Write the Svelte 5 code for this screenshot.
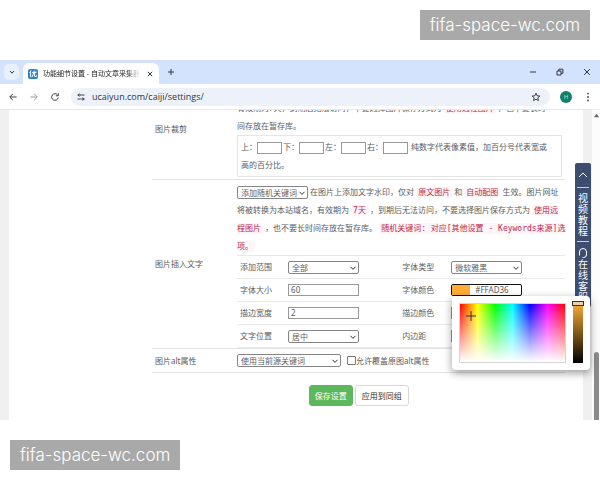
<script lang="ts">
    let ranges = ["全部", "首图", "尾图"];
    let fonts = ["微软雅黑", "宋体", "黑体"];
    let positions = ["居中", "左上", "右下"];
    let sources = ["使用当前源关键词", "使用标题"];
    let modes = ["添加随机关键词", "添加标题"];

    let color = $state("#FFAD36");
    let fontSize = $state("60");
    let strokeWidth = $state("2");
    let overwrite = $state(false);

    const sides = ["上", "下", "左", "右"];
</script>

{#snippet dropdown(id, options, label)}
    <span class="dropdown {id}">
        <select {id} aria-label={label}>
            {#each options as option}
                <option>{option}</option>
            {/each}
        </select>
        <svg viewBox="0 0 8 8"><path d="M1.5 2.8 4 5.4 6.5 2.8" /></svg>
    </span>
{/snippet}

<div class="screen">
    <div class="mark mark-top">fifa-space-wc.com</div>

    <div class="browser">
        <header class="tabs">
            <button class="tab-search" aria-label="搜索标签页">
                <svg viewBox="0 0 10 10"><path d="M3 4 5 6.2 7 4" /></svg>
            </button>
            <div class="tab">
                <svg class="favicon" viewBox="0 0 10 10">
                    <rect width="10" height="10" rx="2" />
                    <path d="M3 1.5 1.8 4M2.6 3.5V8M4.2 3.5H8.4M6 1.8 5.4 5 3.9 8M6.6 4V7.4H8.5V6.3M7 1.6 8 2.6" />
                </svg>
                <span class="title">功能细节设置 - 自动文章采集器</span>
                <button class="close" aria-label="关闭">
                    <svg viewBox="0 0 10 10"><path d="M2.8 2.8 7.2 7.2M7.2 2.8 2.8 7.2" /></svg>
                </button>
            </div>
            <button class="new-tab" aria-label="新标签页">
                <svg viewBox="0 0 10 10"><path d="M5 2V8M2 5H8" /></svg>
            </button>
            <div class="window-buttons">
                <button aria-label="最小化">
                    <svg viewBox="0 0 10 10"><path d="M2 5H8" /></svg>
                </button>
                <button aria-label="还原">
                    <svg viewBox="0 0 10 10"><path d="M2 4H6V8H2ZM3.8 4V2.2H7.9V6.3H6" /></svg>
                </button>
                <button aria-label="关闭窗口">
                    <svg viewBox="0 0 10 10"><path d="M2.2 2.2 7.8 7.8M7.8 2.2 2.2 7.8" /></svg>
                </button>
            </div>
        </header>

        <nav class="toolbar">
            <button aria-label="后退">
                <svg viewBox="0 0 10 10"><path d="M8.6 5H2M4.8 1.9 1.7 5 4.8 8.1" /></svg>
            </button>
            <button class="dim" aria-label="前进">
                <svg viewBox="0 0 10 10"><path d="M1.4 5H8M5.2 1.9 8.3 5 5.2 8.1" /></svg>
            </button>
            <button aria-label="刷新">
                <svg viewBox="0 0 10 10"><path d="M8.2 5.6A3.3 3.3 0 1 1 7.6 3M8.3 1.3V3.8H5.8" /></svg>
            </button>
            <div class="address">
                <svg viewBox="0 0 10 10">
                    <path d="M1.5 3H3M5.2 3H8.6M1.5 7H4.8M7.2 7H8.6" />
                    <circle cx="3.4" cy="3" r="1" />
                    <circle cx="6.8" cy="7" r="1" />
                </svg>
                <input aria-label="地址" value="ucaiyun.com/caiji/settings/" />
                <button aria-label="收藏">
                    <svg viewBox="0 0 10 10"><path d="M5 1.2 6.1 3.8 8.9 4 6.8 5.8 7.4 8.6 5 7.1 2.6 8.6 3.2 5.8 1.1 4 3.9 3.8Z" /></svg>
                </button>
            </div>
            <button class="avatar" aria-label="用户">H</button>
            <button class="more" aria-label="菜单">
                <svg viewBox="0 0 10 10">
                    <circle cx="5" cy="1.6" r="0.9" />
                    <circle cx="5" cy="5" r="0.9" />
                    <circle cx="5" cy="8.4" r="0.9" />
                </svg>
            </button>
        </nav>

        <div class="viewport">
            <main class="page">
                <section class="row crop">
                    <h2>图片裁剪</h2>
                    <div>
                        <p>
                            有效期为7天，到期后无法访问，不要选择图片保存方式为
                            <code>使用远程图片</code> ，也不要长时<br />间存放在暂存库。
                        </p>
                        <div class="sizes">
                            {#each sides as side}
                                <label>{side}：<input /></label>
                            {/each}
                            纯数字代表像素值，加百分号代表宽或<br />高的百分比。
                        </div>
                    </div>
                </section>

                <section class="row insert">
                    <h2>图片插入文字</h2>
                    <div>
                        <p>
                            {@render dropdown("mode", modes, "文字来源")}
                            在图片上添加文字水印，仅对 <code>原文图片</code> 和
                            <code>自动配图</code> 生效。图片网址<br />
                            将被转换为本站域名，有效期为 <code>7天</code>
                            ，到期后无法访问，不要选择图片保存方式为 <code>使用远<br />程图片</code>
                            ，也不要长时间存放在暂存库。
                            <code>随机关键词: 对应[其他设置 - Keywords来源]选<br />项。</code>
                        </p>
                        <div class="fields">
                            <div class="line">
                                <label for="range">添加范围</label>
                                {@render dropdown("range", ranges, "添加范围")}
                                <label for="font">字体类型</label>
                                {@render dropdown("font", fonts, "字体类型")}
                            </div>
                            <div class="line">
                                <label for="size">字体大小</label>
                                <input id="size" bind:value={fontSize} />
                                <label for="color">字体颜色</label>
                                <div class="color">
                                    <div class="color-box">
                                        <span class="swatch" style="background: {color}"></span>
                                        <input id="color" bind:value={color} />
                                    </div>
                                    <div class="picker">
                                        <div class="spectrum">
                                            <svg viewBox="0 0 12 12"><path d="M6 1V11M1 6H11" /></svg>
                                        </div>
                                        <div class="shade"><span class="knob"></span></div>
                                    </div>
                                </div>
                            </div>
                            <div class="line">
                                <label for="stroke">描边宽度</label>
                                <input id="stroke" bind:value={strokeWidth} />
                                <label for="stroke-color">描边颜色</label>
                                <input id="stroke-color" />
                            </div>
                            <div class="line">
                                <label for="position">文字位置</label>
                                {@render dropdown("position", positions, "文字位置")}
                                <label for="padding">内边距</label>
                                <input id="padding" />
                            </div>
                        </div>
                    </div>
                </section>

                <section class="row alt">
                    <h2>图片alt属性</h2>
                    <div class="alt-fields">
                        {@render dropdown("source", sources, "图片alt属性")}
                        <label class="check">
                            <input type="checkbox" bind:checked={overwrite} />允许覆盖原图alt属性
                        </label>
                    </div>
                </section>

                <div class="actions">
                    <button class="save">保存设置</button>
                    <button class="apply">应用到同组</button>
                </div>
            </main>

            <aside class="side">
                <button aria-label="返回顶部">
                    <svg viewBox="0 0 12 12"><path d="M2 8 6 4 10 8" /></svg>
                </button>
                <a href="#video">视频教程</a>
                <a href="#service">
                    <svg viewBox="0 0 12 12"><path d="M2.5 7V5A3.5 3.5 0 0 1 9.5 5V7.5A3 3 0 0 1 6.5 10.5H5.5M2.5 5.5V8.5M9.5 5.5V8.5" /></svg>
                    在线客服
                </a>
            </aside>

            <div class="scrollbar">
                <svg viewBox="0 0 8 8"><path d="M4 2 7 6H1Z" /></svg>
                <span class="thumb"></span>
            </div>
        </div>
    </div>

    <div class="mark mark-bottom">fifa-space-wc.com</div>
</div>

<style>
    :global(body) {
        background: #fff;
    }

    * {
        box-sizing: border-box;
    }

    .screen {
        position: relative;
        display: flex;
        flex-direction: column;
        min-height: 100vh;
        padding: 60px 0;
        font: 8px/18px "Noto Sans", "Noto Sans CJK SC", sans-serif;
        color: #5c5c5c;
    }

    .mark {
        position: absolute;
        padding: 0 10px;
        background: #a9a9a9;
        color: #fff;
        font: 300 17px/30px Inter, sans-serif;
    }

    .mark-top {
        top: 10px;
        right: 10px;
    }

    .mark-bottom {
        bottom: 10px;
        left: 10px;
    }

    button,
    input,
    select {
        margin: 0;
        padding: 0;
        border: 0;
        background: none;
        color: inherit;
        font: inherit;
    }

    svg {
        display: block;
        fill: none;
        stroke: currentColor;
        stroke-width: 1;
    }

    .browser {
        flex: 1;
        display: flex;
        flex-direction: column;
    }

    /* Tab strip */
    .tabs {
        display: flex;
        align-items: center;
        height: 24px;
        padding: 0 8px 0 4px;
        background: #d3e2fd;
        color: #303540;
    }

    .tabs svg,
    .toolbar svg {
        width: 10px;
        height: 10px;
    }

    .tab-search {
        display: grid;
        place-items: center;
        width: 15px;
        height: 16px;
        border-radius: 5px;
        background: #e8f0fe;
    }

    .tab {
        display: flex;
        align-items: center;
        align-self: flex-end;
        gap: 5px;
        width: 136px;
        height: 21px;
        margin-left: 4px;
        padding: 0 4px 0 5px;
        border-radius: 6px 6px 0 0;
        background: #fff;
    }

    .tab .favicon {
        flex: none;
        color: #fff;
    }

    .favicon rect {
        fill: #2b84d2;
        stroke: none;
    }

    .title {
        flex: 1;
        overflow: hidden;
        font-size: 7px;
        white-space: nowrap;
        color: #222;
        mask-image: linear-gradient(90deg, #000 85%, transparent);
    }

    .new-tab {
        margin-left: 7px;
    }

    .window-buttons {
        display: flex;
        gap: 17px;
        margin-left: auto;
    }

    /* Address bar */
    .toolbar {
        display: flex;
        align-items: center;
        gap: 11px;
        height: 26px;
        padding: 0 8px;
        border-bottom: 1px solid #e6e8ec;
        background: #fff;
        color: #3c4043;
    }

    .dim {
        color: #999;
    }

    .address {
        flex: 1;
        display: flex;
        align-items: center;
        gap: 6px;
        height: 18px;
        padding: 0 9px 0 5px;
        border-radius: 9px;
        background: #edf2fa;
    }

    .address input {
        flex: 1;
        font: 9px "Open Sans", sans-serif;
        color: #30343a;
    }

    .avatar {
        width: 12px;
        height: 12px;
        margin-left: -1px;
        border-radius: 50%;
        background: #12806a;
        color: #b9e4d8;
        font-size: 6px;
        line-height: 12px;
    }

    .more {
        margin-right: -1px;
    }

    .more svg {
        fill: currentColor;
        stroke: none;
    }

    /* Page */
    .viewport {
        position: relative;
        flex: 1;
        display: flex;
        overflow: hidden;
        background: #f0f0f0;
    }

    .page {
        flex: 1;
        margin: -11px 9px 0;
        padding: 0 18px 0 143px;
        background: #fff;
    }

    .row {
        display: grid;
        grid-template-columns: 85px 1fr;
        align-items: center;
        border-bottom: 1px solid #e4e4e4;
    }

    h2 {
        margin: 0;
        padding-left: 3px;
        font-size: 8px;
        font-weight: 400;
    }

    p {
        margin: 0;
        white-space: nowrap;
    }

    code {
        padding: 1px 2px;
        border-radius: 2px;
        background: #fdf5f7;
        color: #c0254f;
        font: 8px "DejaVu Sans Mono", "Noto Sans CJK SC", monospace;
    }

    .crop {
        padding-bottom: 2px;
    }

    .crop h2 {
        padding-bottom: 18px;
    }

    .sizes {
        margin-right: 3px;
        padding: 2px 3px;
        border: 1px solid #e6e6e6;
        white-space: nowrap;
    }

    .sizes input {
        width: 25px;
        height: 12px;
        border: 1px solid #999;
        vertical-align: middle;
    }

    .insert p {
        padding: 3px 0 0;
    }

    .dropdown {
        position: relative;
        display: inline-block;
        width: 71px;
        height: 13px;
        line-height: 11px;
        vertical-align: middle;
    }

    .dropdown.source {
        width: 104px;
    }

    .dropdown select {
        display: block;
        appearance: none;
        width: 100%;
        height: 100%;
        padding: 0 3px;
        border: 1px solid #858585;
        border-radius: 2px;
        background: #fff;
    }

    .dropdown svg {
        position: absolute;
        top: 3px;
        right: 2px;
        width: 8px;
        height: 8px;
        color: #333;
        pointer-events: none;
    }

    .sizes label {
        margin-right: 1px;
    }

    .line {
        display: grid;
        grid-template-columns: 51fr 114fr 49fr 114fr;
        align-items: center;
        height: 23px;
        border-top: 1px solid #e9e9e9;
    }

    .fields {
        border-bottom: 1px solid #e9e9e9;
    }

    .line label:first-child {
        padding-left: 3px;
    }

    .line > input {
        width: 71px;
        height: 12px;
        padding: 0 2px;
        border: 1px solid #999;
    }

    .color {
        position: relative;
    }

    .color-box {
        display: flex;
        width: 71px;
        height: 12px;
        overflow: hidden;
        border: 1px solid #111;
        border-radius: 2px;
    }

    .swatch {
        width: 18px;
    }

    .color-box input {
        flex: 1;
        min-width: 0;
        padding-left: 5px;
        outline: none;
    }

    .picker {
        position: absolute;
        z-index: 2;
        top: 12px;
        left: 1px;
        display: flex;
        gap: 7px;
        padding: 7px;
        border-radius: 4px;
        background: #fff;
        box-shadow: 0 3px 9px rgba(0, 0, 0, 0.4);
    }

    .spectrum {
        width: 107px;
        height: 60px;
        padding: 6px 5px;
        border: 1px solid #d5d5d5;
        background:
            linear-gradient(rgba(255, 255, 255, 0), #fff),
            linear-gradient(90deg, #f00, #ff0, #0f0, #0ff, #00f, #f0f, #f00);
    }

    .spectrum svg {
        width: 12px;
        height: 12px;
        color: #333;
    }

    .shade {
        width: 10px;
        background: linear-gradient(#ffad36, #000);
    }

    .knob {
        display: block;
        width: 12px;
        height: 5px;
        margin: -2px -1px 0;
        border: 1px solid #333;
        background: #efd0ab;
    }

    .alt {
        height: 24px;
    }

    .alt-fields {
        display: flex;
        align-items: center;
        gap: 6px;
    }

    .check {
        display: flex;
        align-items: center;
    }

    .check input {
        appearance: none;
        width: 9px;
        height: 9px;
        border: 1px solid #777;
        border-radius: 1px;
    }

    .check input:checked {
        background: #2b84d2;
    }

    .actions {
        display: flex;
        justify-content: center;
        gap: 2px;
        margin-top: 12px;
    }

    .actions button {
        height: 21px;
        padding: 0 6px;
        border: 1px solid #d8d8d8;
        border-radius: 3px;
        color: #333;
    }

    .actions .save {
        padding: 0 5px;
        border-color: #5cb85c;
        background: #5cb85c;
        color: #fff;
    }

    /* Floating help strip */
    .side {
        position: absolute;
        top: 53px;
        right: 9px;
        width: 16px;
        padding: 0 2px;
        border-radius: 2px;
        background: #3e4c70;
        color: #fff;
        font-size: 10px;
        line-height: 11px;
        text-align: center;
    }

    .side button,
    .side a {
        display: block;
        width: 100%;
        padding: 5px 1px 4px;
        color: inherit;
        text-decoration: none;
    }

    .side button {
        padding: 6px 0;
    }

    .side a {
        border-top: 1px solid #c9cedb;
    }

    .side svg {
        width: 12px;
        height: 12px;
        margin: 0 auto;
    }

    .side a svg {
        margin-left: -1px;
    }

    .scrollbar {
        display: flex;
        flex-direction: column;
        align-items: center;
        justify-content: space-between;
        width: 8px;
        padding-top: 2px;
        background: #fcfcfc;
    }

    .scrollbar svg {
        width: 7px;
        height: 7px;
        fill: #666;
        stroke: none;
    }

    .thumb {
        width: 5px;
        height: 22%;
        border-radius: 3px 3px 0 0;
        background: #8b8b8b;
    }
</style>
